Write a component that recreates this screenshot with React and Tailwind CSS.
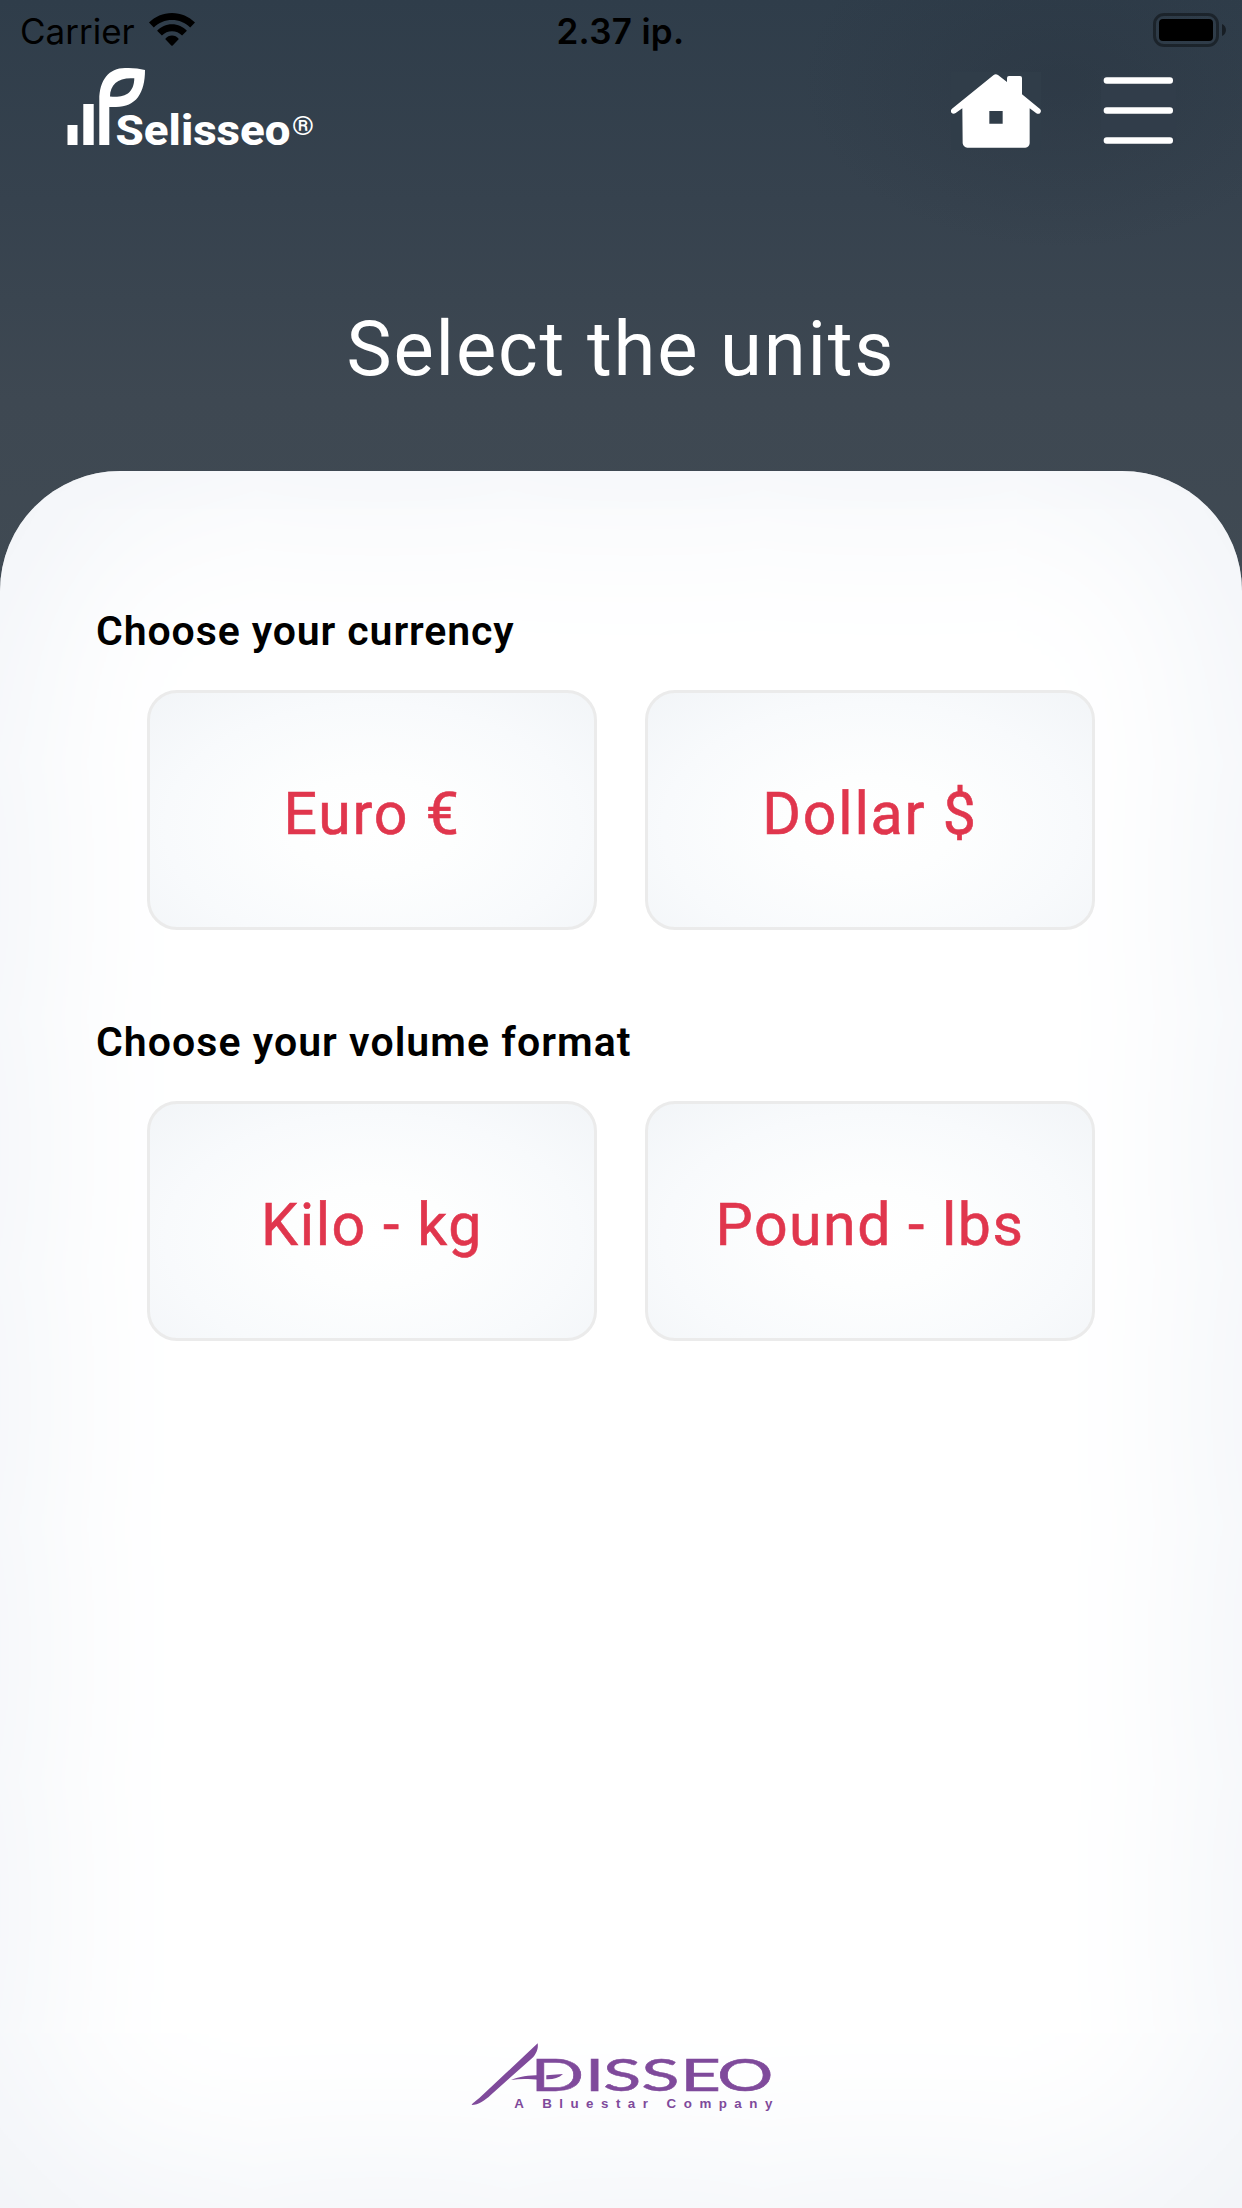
import { clsx } from 'clsx';

const sections = [
  {
    title: 'Choose your currency',
    tracking: 'tracking-[0.9px]',
    options: [
      { label: 'Euro €', tracking: 'tracking-[1.8px]' },
      { label: 'Dollar $', tracking: 'tracking-[1.8px]' },
    ],
  },
  {
    title: 'Choose your volume format',
    tracking: 'tracking-[1.05px]',
    options: [
      { label: 'Kilo - kg', tracking: 'tracking-[1.6px]' },
      { label: 'Pound - lbs', tracking: 'tracking-[1.5px]' },
    ],
  },
];

export default function App() {
  return (
    <div className="flex h-[2208px] w-[1242px] flex-col overflow-hidden bg-[radial-gradient(ellipse_260px_170px_at_1060px_80px,rgba(36,46,58,0.3),rgba(36,46,58,0)),linear-gradient(180deg,#2f3d4a_0px,#36424e_200px,#3e4852_400px,#404a53_600px)] font-['Roboto',sans-serif]">
      <StatusBar />
      <Header />
      <h1 className="mt-[144px] h-[90px] text-center text-[76px] leading-[90px] tracking-[1.8px] text-white">
        Select the units
      </h1>
      <main className="mt-[77px] flex flex-1 flex-col rounded-t-[120px] bg-white pt-[136px] shadow-[inset_0_0_200px_#eaeef4]">
        {sections.map((section) => (
          <UnitSection key={section.title} section={section} />
        ))}
        <footer className="mt-auto flex justify-center pb-[80px] pl-[7px]">
          <AdisseoLogo />
        </footer>
      </main>
    </div>
  );
}

function StatusBar() {
  return (
    <div className="grid h-[60px] grid-cols-3 items-center pr-[15px] pl-[20px] font-['Inter',sans-serif] text-[35px] leading-none">
      <div className="flex items-center gap-[14px] pt-[2px]">
        <span>Carrier</span>
        <svg className="-mt-[3px] h-[34px] w-[46px]" viewBox="0 0 46 34">
          <path d="M23 0C32 0 40 3.6 46 9.6L41.2 14.4C36.2 9.6 30 7 23 7S9.8 9.6 4.8 14.4L0 9.6C6 3.6 14 0 23 0Z" />
          <path d="M23 11.3C28.9 11.3 34 13.7 37.9 17.8L33.1 22.6C30.3 19.8 26.9 18.3 23 18.3S15.7 19.8 12.9 22.6L8.1 17.8C12 13.7 17.1 11.3 23 11.3Z" />
          <path d="M23 22.5C25.6 22.5 28 23.6 29.8 25.9L23.7 32.4Q23 33.1 22.3 32.4L16.2 25.9C18 23.6 20.4 22.5 23 22.5Z" />
        </svg>
      </div>
      <span className="pt-[2px] pr-[6px] text-center font-semibold tracking-[0.3px]">2.37 ip.</span>
      <svg className="h-[34px] w-[74px] justify-self-end" viewBox="0 0 74 34">
        <rect x="1.5" y="1.5" width="63" height="31" rx="9.5" fill="none" stroke="#000" strokeOpacity="0.4" strokeWidth="3" />
        <rect x="6" y="6" width="54" height="22" rx="4" />
        <path d="M69 11C74.3 13 74.3 21 69 23Z" fillOpacity="0.5" />
      </svg>
    </div>
  );
}

function Header() {
  return (
    <header className="flex h-[100px] items-start justify-between pr-[66px] pl-[67px]">
      <SelisseoLogo />
      <div className="flex gap-[60px] pt-[12px]">
        <svg className="h-[78px] w-[90px] bg-[#303d49]" viewBox="153 216 270 234">
          <path
            d="M281 225Q287 220 294 225L321 246V234Q321 228 327 228H360Q366 228 366 234V283L420 327Q425 332 421 338Q416 344 409 340L389 325V430Q388 442 376 443H202Q190 442 188 430L187 325L167 339Q160 344 155 339Q150 332 156 326ZM268 333V371H308V333Z"
            fill="#fff"
            fillRule="evenodd"
          />
        </svg>
        <svg className="mt-[4px] h-[69px] w-[75px] bg-[#313d4a]" viewBox="603 228 225 207">
          {[232, 322, 412].map((y) => (
            <rect key={y} x="611" y={y} width="208" height="19" rx="9" fill="#fff" />
          ))}
        </svg>
      </div>
    </header>
  );
}

function SelisseoLogo() {
  return (
    <svg className="mt-[5px] h-[86px] w-[270px] overflow-visible" viewBox="67 65 270 86" fill="#fff">
      <rect x="67.5" y="125" width="10" height="20" />
      <rect x="83.3" y="104" width="10.4" height="41" />
      <path
        d="M99.3 145V100C99.300 80 109 68 125 68Q136 67.5 145 70C145 93 136 107 116 107H109.3V145ZM110 96.5C124 98 134 94 134.3 78.3C119 77 110 84 110 96.5Z"
        fillRule="evenodd"
      />
      <text x="115.5" y="145" fontSize="42" fontWeight="800" textLength="175" lengthAdjust="spacingAndGlyphs">
        Selisseo
      </text>
      <text x="292" y="134.5" fontSize="26.5" fontWeight="600" textLength="22" lengthAdjust="spacingAndGlyphs">
        ®
      </text>
    </svg>
  );
}

function UnitSection({ section }) {
  return (
    <section className="mb-[88px]">
      <h2 className={clsx('pl-[96px] text-[41px] leading-[48px] font-semibold text-black', section.tracking)}>
        {section.title}
      </h2>
      <div className="mt-[35px] flex gap-[48px] px-[147px]">
        {section.options.map((option) => (
          <button
            key={option.label}
            className={clsx(
              'h-[240px] w-[450px] rounded-[30px] border-3 border-[#ebebeb] pt-[6px] text-[59px] leading-none font-normal text-[#e0364d] [-webkit-text-stroke:0.6px_#e0364d]',
              'bg-[radial-gradient(ellipse_75%_85%_at_50%_57%,#ffffff_0%,#fdfefe_25%,#f8fafc_62%,#f1f4f7_100%)]',
              option.tracking
            )}
          >
            {option.label}
          </button>
        ))}
      </div>
    </section>
  );
}

function AdisseoLogo() {
  return (
    <svg className="h-[88px] w-[310px]" viewBox="90 60 930 264" fill="#7f4a9b">
      {/* swoosh and crossbar of the mark */}
      <path d="M293 70C296 88 287 106 270 120L153 224C134 242 116 254 95 255C97 250 108 243 118 234Z" />
      <path d="M213 180C238 170 265 166 300 166V180C268 177 243 176 213 180Z" />
      <path d="M319 166L369 162C356 174 339 179 319 178Z" />
      <text
        transform="scale(1.58 1)"
        x="172 275 309.5 382 456 526"
        y="214"
        fontFamily="Lato, sans-serif"
        fontSize="134"
        stroke="#7f4a9b"
        strokeWidth="1.5"
      >
        DISSEO
      </text>
      <text x="223" y="263" fontFamily="Liberation Sans, sans-serif" fontSize="40" fontWeight="700" textLength="774">
        A Bluestar Company
      </text>
    </svg>
  );
}
